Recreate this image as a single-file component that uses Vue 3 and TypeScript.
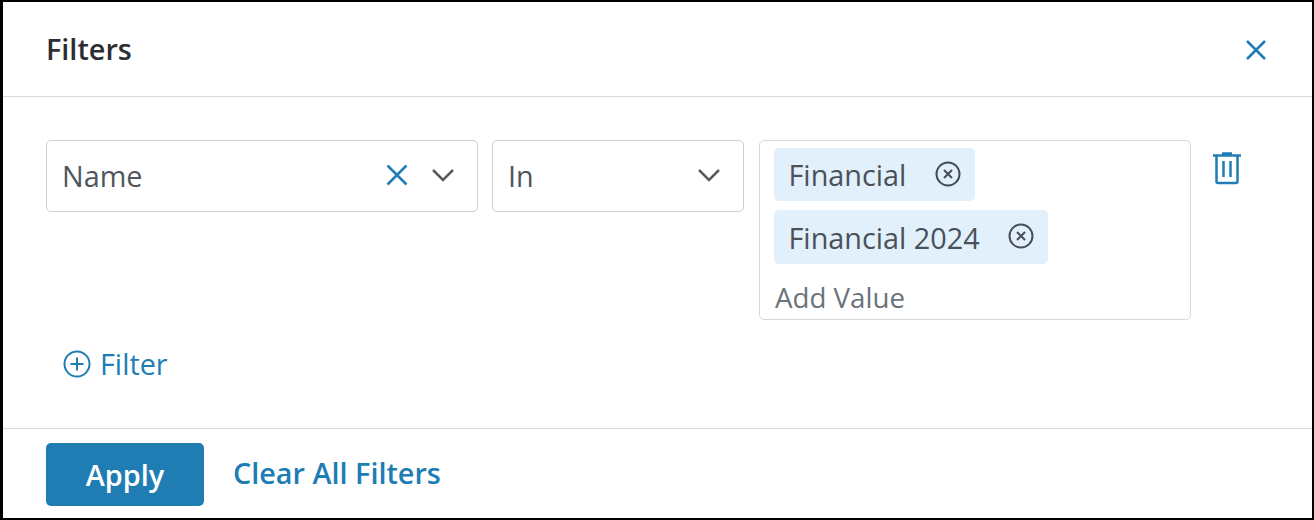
<template>
  <div class="panel">
    <header class="panel-header">
      <h2 class="panel-title">Filters</h2>
      <button class="icon-btn close-btn" aria-label="Close">
        <svg width="20" height="20" viewBox="0 0 20 20"><path d="M1 1l18 18M19 1L1 19" class="blue-stroke" /></svg>
      </button>
    </header>

    <section class="panel-body">
      <div class="filter-row">
        <div class="select name-select">
          <span class="select-text">Name</span>
          <svg class="clear-icon" width="22" height="22" viewBox="0 0 22 22"><path d="M1.5 1.5l19 19M20.5 1.500l-19 19" class="blue-stroke" /></svg>
          <svg class="chevron" width="24" height="14" viewBox="0 0 24 14"><path d="M2 2l10 10L22 2" /></svg>
        </div>
        <div class="select op-select">
          <span class="select-text">In</span>
          <svg class="chevron" width="24" height="14" viewBox="0 0 24 14"><path d="M2 2l10 10L22 2" /></svg>
        </div>
        <div class="value-box">
          <div v-for="tag in tags" :key="tag" class="tag">
            <span>{{ tag }}</span>
            <svg width="26" height="26" viewBox="0 0 26 26" class="tag-x">
              <circle cx="13" cy="13" r="11.500" />
              <path d="M9 9l8 8M17 9l-8 8" />
            </svg>
          </div>
          <span class="add-value">Add Value</span>
        </div>
        <button class="icon-btn trash-btn" aria-label="Delete">
          <svg width="30" height="34" viewBox="0 0 30 34">
            <path class="blue-stroke" d="M1 4.500h28M10 2.500h10M4.500 5v25.500a1.500 1.500 0 0 0 1.500 1.500h18a1.500 1.500 0 0 0 1.500-1.500V5M11.500 10v16M18.500 10v16" />
          </svg>
        </button>
      </div>

      <button class="add-filter">
        <svg width="28" height="28" viewBox="0 0 28 28">
          <circle cx="14" cy="14" r="12.500" class="thin-stroke" />
          <path d="M14 7.500v13M7.500 14h13" class="thin-stroke" />
        </svg>
        <span>Filter</span>
      </button>
    </section>

    <footer class="panel-footer">
      <button class="apply-btn">Apply</button>
      <a class="clear-link">Clear All Filters</a>
    </footer>
  </div>
</template>

<script setup lang="ts">
const tags: string[] = ['Financial', 'Financial 2024']
</script>

<style>
html,
body {
  margin: 0;
  background: #fff;
}
</style>

<style scoped>
.panel {
  box-sizing: border-box;
  width: 1314px;
  height: 520px;
  border: 2px solid #000;
  border-left-width: 3px;
  display: flex;
  flex-direction: column;
  font-family: "Open Sans", "Noto Sans", sans-serif;
  background: #fff;
  overflow: hidden;
}

.panel-header {
  height: 95px;
  flex-shrink: 0;
  box-sizing: border-box;
  border-bottom: 1px solid #d3dde5;
  display: flex;
  align-items: center;
  justify-content: space-between;
  padding: 0 46px 0 43px;
}

.panel-title {
  margin: 0 0 2px;
  font-size: 28.800px;
  font-weight: 600;
  color: #2b2e33;
}

.icon-btn {
  border: 0;
  background: none;
  padding: 0;
  display: flex;
}

.close-btn {
  margin-top: 2px;
}

.blue-stroke {
  fill: none;
  stroke: #207db4;
  stroke-width: 2.500;
}

.thin-stroke {
  fill: none;
  stroke: #207db4;
  stroke-width: 2;
}

.panel-body {
  flex: 1;
  padding: 43px 0 0 43px;
}

.filter-row {
  display: flex;
  align-items: flex-start;
}

.select {
  box-sizing: border-box;
  height: 72px;
  display: flex;
  align-items: center;
  border: 1px solid #c8d0d8;
  border-radius: 5px;
  padding: 0 22px 0 15px;
}

.name-select {
  width: 432px;
  margin-right: 14px;
}

.op-select {
  width: 252px;
  margin-right: 15px;
}

.select-text {
  flex: 1;
  margin-bottom: 2px;
  font-size: 28.800px;
  color: #4f565e;
}

.clear-icon {
  margin: -2px 23px 0 0;
}

.chevron {
  margin-top: -3px;
}

.chevron path {
  fill: none;
  stroke: #5a5a5a;
  stroke-width: 2.500;
}

.value-box {
  box-sizing: border-box;
  width: 432px;
  height: 180px;
  border: 1px solid #d0dae0;
  border-radius: 5px;
  padding: 7px 14px 0;
  display: flex;
  flex-direction: column;
  align-items: flex-start;
  gap: 9px;
}

.tag {
  height: 53px;
  box-sizing: border-box;
  background: #e2f0fb;
  border-radius: 5px;
  padding: 0 14px 0 14.500px;
  display: flex;
  align-items: center;
  gap: 28.500px;
  font-size: 28.800px;
  color: #4a5159;
}

.tag:nth-child(2) {
  height: 54px;
}

.tag-x {
  flex-shrink: 0;
  margin-top: -2px;
}

.tag-x circle,
.tag-x path {
  fill: none;
  stroke: #464d55;
  stroke-width: 2;
}

.add-value {
  margin: 6px 0 0 1px;
  font-size: 27.700px;
  line-height: 36px;
  color: #6b737a;
}

.trash-btn {
  margin: 11px 0 0 21px;
}

.add-filter {
  margin: 24px 0 0 17px;
  border: 0;
  background: none;
  padding: 0;
  display: flex;
  align-items: center;
  gap: 9px;
  font-family: inherit;
  font-size: 28.800px;
  color: #207db4;
}

.panel-footer {
  height: 90px;
  flex-shrink: 0;
  box-sizing: border-box;
  border-top: 1px solid #d3dde5;
  display: flex;
  align-items: center;
  padding: 0 0 0 43px;
  gap: 29px;
}

.apply-btn {
  box-sizing: border-box;
  width: 158px;
  height: 63px;
  margin-top: 1px;
  border: 0;
  border-radius: 5px;
  background: #207db4;
  color: #fff;
  font-family: inherit;
  font-size: 28.800px;
  font-weight: 600;
}

.clear-link {
  font-size: 28.800px;
  font-weight: 600;
  color: #207db4;
  margin-bottom: 2px;
}
</style>
